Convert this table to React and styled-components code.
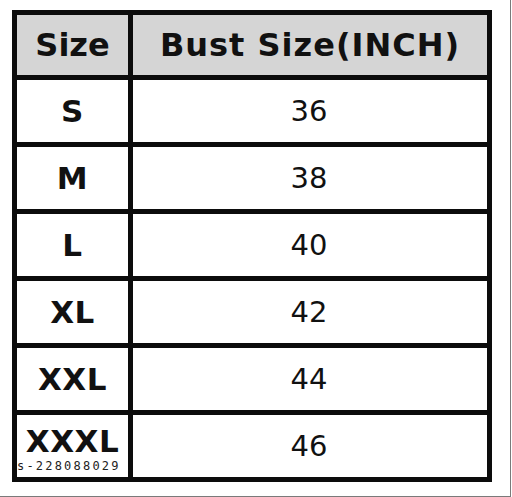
import styled, { createGlobalStyle } from "styled-components";

const GlobalStyle = createGlobalStyle`
  html, body {
    margin: 0;
    padding: 0;
    background: #ffffff;
  }
`;

const rows = [
  { size: "S", bust: 36 },
  { size: "M", bust: 38 },
  { size: "L", bust: 40 },
  { size: "XL", bust: 42 },
  { size: "XXL", bust: 44 },
  { size: "XXXL", bust: 46 },
];

export default function App() {
  return (
    <>
      <GlobalStyle />
      <Frame>
        <Chart>
          <HeadCell>Size</HeadCell>
          <HeadCell $spacing={1}>Bust Size(INCH)</HeadCell>
          {rows.map((row, i) => {
            const last = i === rows.length - 1;
            return (
              <Row key={row.size}>
                <SizeCell $stamped={last}>
                  {row.size}
                  {last && <Stamp>s-228088029</Stamp>}
                </SizeCell>
                <ValueCell>{row.bust}</ValueCell>
              </Row>
            );
          })}
        </Chart>
      </Frame>
    </>
  );
}

const Frame = styled.div`
  box-sizing: border-box;
  width: 511px;
  height: 497px;
  padding: 10px 0 0 12px;
  border-right: 1px solid #7a7a7a;
  border-bottom: 1px solid #7a7a7a;
`;

const Chart = styled.div`
  display: grid;
  grid-template-columns: 111px 354px;
  grid-template-rows: 60px repeat(6, 62px);
  gap: 5px;
  padding: 5px;
  width: fit-content;
  background: #0c0c0c;
  font-family: "DejaVu Sans", Verdana, sans-serif;
  color: #111;
`;

const Row = styled.div`
  display: contents;
`;

const Cell = styled.div`
  position: relative;
  display: flex;
  align-items: center;
  justify-content: center;
  background: #ffffff;
  white-space: nowrap;
`;

const HeadCell = styled(Cell)`
  background: #d5d5d5;
  font-weight: bold;
  font-size: 32px;
  letter-spacing: ${(p) => p.$spacing || 0}px;
`;

const SizeCell = styled(Cell)`
  font-weight: bold;
  font-size: 31px;
  letter-spacing: 0.5px;
  padding-bottom: ${(p) => (p.$stamped ? 10 : 0)}px;
  overflow: visible;
`;

const ValueCell = styled(Cell)`
  font-size: 29px;
  padding-right: 2px;
`;

const Stamp = styled.span`
  position: absolute;
  left: 0;
  bottom: 5px;
  font-family: "DejaVu Sans Mono", monospace;
  font-size: 12px;
  line-height: 12px;
  font-weight: normal;
  color: #222;
  letter-spacing: 2.2px;
`;
